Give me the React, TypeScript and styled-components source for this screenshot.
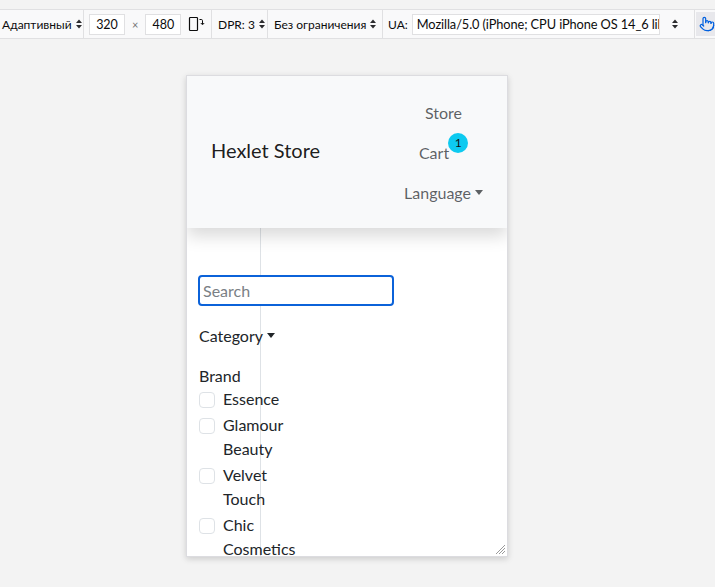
import React from "react";
import styled, { createGlobalStyle } from "styled-components";
import { Pointer } from "lucide-react";

const GlobalStyle = createGlobalStyle`
  html, body { margin: 0; padding: 0; }
  body {
    background: #f3f3f3;
    font-family: Lato, "Noto Sans", sans-serif;
    overflow: hidden;
  }
  * { box-sizing: border-box; }
`;

const Shell = styled.div`
  width: 715px;
  height: 587px;
  display: flex;
  flex-direction: column;
`;

const Toolbar = styled.div`
  margin-top: 9px;
  height: 30px;
  background: #f9f9fa;
  border-top: 1px solid #e0e0e2;
  border-bottom: 1px solid #e0e0e2;
  display: flex;
  align-items: stretch;
  font-size: 12px;
  color: #0c0c0d;
`;

const Segment = styled.div<{ $w: number; $pl: number }>`
  width: ${(p) => p.$w}px;
  flex: none;
  padding-left: ${(p) => p.$pl}px;
  display: flex;
  align-items: center;
  gap: 4px;
  border-right: 1px solid #e0e0e2;
  white-space: nowrap;
`;

const SizeInput = styled.div<{ $w: number }>`
  width: ${(p) => p.$w}px;
  height: 21px;
  background: #fff;
  border: 1px solid #e0e0e2;
  display: flex;
  align-items: center;
  justify-content: center;
  font-size: 12.5px;
`;

const UaInput = styled.div`
  width: 248px;
  height: 21px;
  background: #fff;
  border: 1px solid #e0e0e2;
  display: flex;
  align-items: center;
  padding-left: 4px;
  overflow: hidden;
  white-space: nowrap;
  font-size: 12.8px;
  letter-spacing: -0.1px;
`;

const Times = styled.span`
  color: #737373;
  font-size: 11px;
  margin: 0 3px;
`;

const IconSlot = styled.span<{ $ml: number }>`
  margin-left: ${(p) => p.$ml}px;
  display: flex;
`;

const TouchButton = styled.div`
  flex: 1;
  background: #e8e8ec;
  margin: 2px 0 2px 1px;
  display: flex;
  align-items: center;
  padding-left: 3px;
  color: #0060df;
`;

const Stage = styled.div`
  flex: 1;
  padding: 36px 0 0 186px;
`;

const Viewport = styled.div`
  width: 322px;
  height: 482px;
  border: 1px solid #dcdce0;
  box-shadow: 0 2px 6px rgba(0, 0, 0, 0.16);
  background: #fff;
  overflow: hidden;
  display: flex;
  flex-direction: column;
  position: relative;
  color: #212529;
  font-size: 16px;
  line-height: 24px;
`;

const Navbar = styled.nav`
  flex: none;
  background: #f8f9fa;
  padding: 8px 24px;
  display: flex;
  align-items: center;
  justify-content: space-between;
  box-shadow: 0 8px 16px rgba(0, 0, 0, 0.15);
  position: relative;
  z-index: 1;
`;

const Brand = styled.div`
  font-size: 20px;
  line-height: 30px;
  color: rgba(0, 0, 0, 0.9);
  margin-top: -4px;
`;

const NavList = styled.div`
  display: flex;
  flex-direction: column;
  align-items: center;
  padding: 9px 0 7px;
`;

const NavLink = styled.div<{ $caret?: boolean }>`
  padding: 8px 0;
  line-height: 24px;
  color: rgba(33, 37, 41, 0.72);
  display: flex;
  align-items: center;
  &::after {
    content: "";
    display: ${(p) => (p.$caret ? "inline-block" : "none")};
    margin-left: 4px;
    margin-top: -1px;
    border-top: 5px solid currentColor;
    border-left: 4.5px solid transparent;
    border-right: 4.5px solid transparent;
  }
`;

const Badge = styled.span`
  width: 20px;
  height: 20px;
  border-radius: 50%;
  background: #0dcaf0;
  color: #111;
  font-size: 12px;
  line-height: 20px;
  text-align: center;
  margin-top: -20px;
  margin-left: -1px;
`;

const Body = styled.div`
  flex: 1;
  display: flex;
`;

const Sidebar = styled.aside`
  width: 74px;
  flex: none;
  border-right: 1px solid #dee2e6;
  padding: 47px 0 0 12px;
`;

const Search = styled.div`
  width: 196px;
  height: 31px;
  margin-left: -1px;
  border: 2px solid #0b62d9;
  border-radius: 4px;
  background: #fff;
  padding-left: 3px;
  display: flex;
  align-items: center;
  color: #7a7f85;
  font-size: 16px;
`;

const Toggle = styled.div`
  margin-top: 18px;
  display: flex;
  align-items: center;
  white-space: nowrap;
  &::after {
    content: "";
    display: inline-block;
    margin-left: 4px;
    margin-top: -1px;
    border-top: 5px solid currentColor;
    border-left: 4.5px solid transparent;
    border-right: 4.5px solid transparent;
  }
`;

const GroupTitle = styled.div`
  margin-top: 16px;
  white-space: nowrap;
`;

const CheckList = styled.div`
  width: 104px;
  margin-top: -1px;
  display: flex;
  flex-direction: column;
  gap: 2px;
`;

const CheckItem = styled.label`
  display: grid;
  grid-template-columns: 16px 1fr;
  column-gap: 8px;
  line-height: 24px;
`;

const Box = styled.span`
  width: 16px;
  height: 16px;
  margin-top: 5px;
  border: 1px solid #dee2e6;
  border-radius: 4px;
  background: #fff;
`;

const Grip = styled.svg`
  position: absolute;
  right: 1px;
  bottom: 1px;
`;

const Arrows = () => (
  <svg width="6" height="10" viewBox="0 0 6 10">
    <polygon points="0,4 3,0.5 6,4" fill="#2b2b2e" />
    <polygon points="0,6 3,9.5 6,6" fill="#2b2b2e" />
  </svg>
);

const RotateIcon = () => (
  <svg width="18" height="16" viewBox="0 0 18 16" fill="none" stroke="#0c0c0d">
    <rect x="1.5" y="1.5" width="8" height="13" rx="0.8" strokeWidth="1.2" />
    <path d="M11.5 3.5 h1.8 a1.2 1.2 0 0 1 1.2 1.2 v3.3" strokeWidth="1" />
    <path d="M12.8 7 l1.7 1.8 l1.7 -1.8" strokeWidth="1" />
  </svg>
);

const brands = ["Essence", "Glamour Beauty", "Velvet Touch", "Chic Cosmetics"];

export default function App() {
  return (
    <>
      <GlobalStyle />
      <Shell>
        <Toolbar>
          <Segment $w={84} $pl={2}>
            Адаптивный <Arrows />
          </Segment>
          <Segment $w={128} $pl={5}>
            <SizeInput $w={36}>320</SizeInput>
            <Times>×</Times>
            <SizeInput $w={36}>480</SizeInput>
            <IconSlot $ml={3}>
              <RotateIcon />
            </IconSlot>
          </Segment>
          <Segment $w={56} $pl={6}>
            DPR: 3 <Arrows />
          </Segment>
          <Segment $w={115} $pl={6}>
            Без ограничения <Arrows />
          </Segment>
          <Segment $w={312} $pl={5}>
            UA:
            <UaInput>Mozilla/5.0 (iPhone; CPU iPhone OS 14_6 like Mac OS X)</UaInput>
            <IconSlot $ml={8}>
              <Arrows />
            </IconSlot>
          </Segment>
          <TouchButton>
            <Pointer size={16} strokeWidth={1.8} />
          </TouchButton>
        </Toolbar>
        <Stage>
          <Viewport>
            <Navbar>
              <Brand>Hexlet Store</Brand>
              <NavList>
                <NavLink>Store</NavLink>
                <NavLink>
                  Cart
                  <Badge>1</Badge>
                </NavLink>
                <NavLink $caret>Language</NavLink>
              </NavList>
            </Navbar>
            <Body>
              <Sidebar>
                <Search>Search</Search>
                <Toggle>Category</Toggle>
                <GroupTitle>Brand</GroupTitle>
                <CheckList>
                  {brands.map((b) => (
                    <CheckItem key={b}>
                      <Box />
                      <span>{b}</span>
                    </CheckItem>
                  ))}
                </CheckList>
              </Sidebar>
            </Body>
            <Grip width="12" height="12" viewBox="0 0 12 12">
              <path d="M11 2 L2 11 M11 5 L5 11 M11 8 L8 11" stroke="#9a9a9a" strokeWidth="1" />
            </Grip>
          </Viewport>
        </Stage>
      </Shell>
    </>
  );
}
